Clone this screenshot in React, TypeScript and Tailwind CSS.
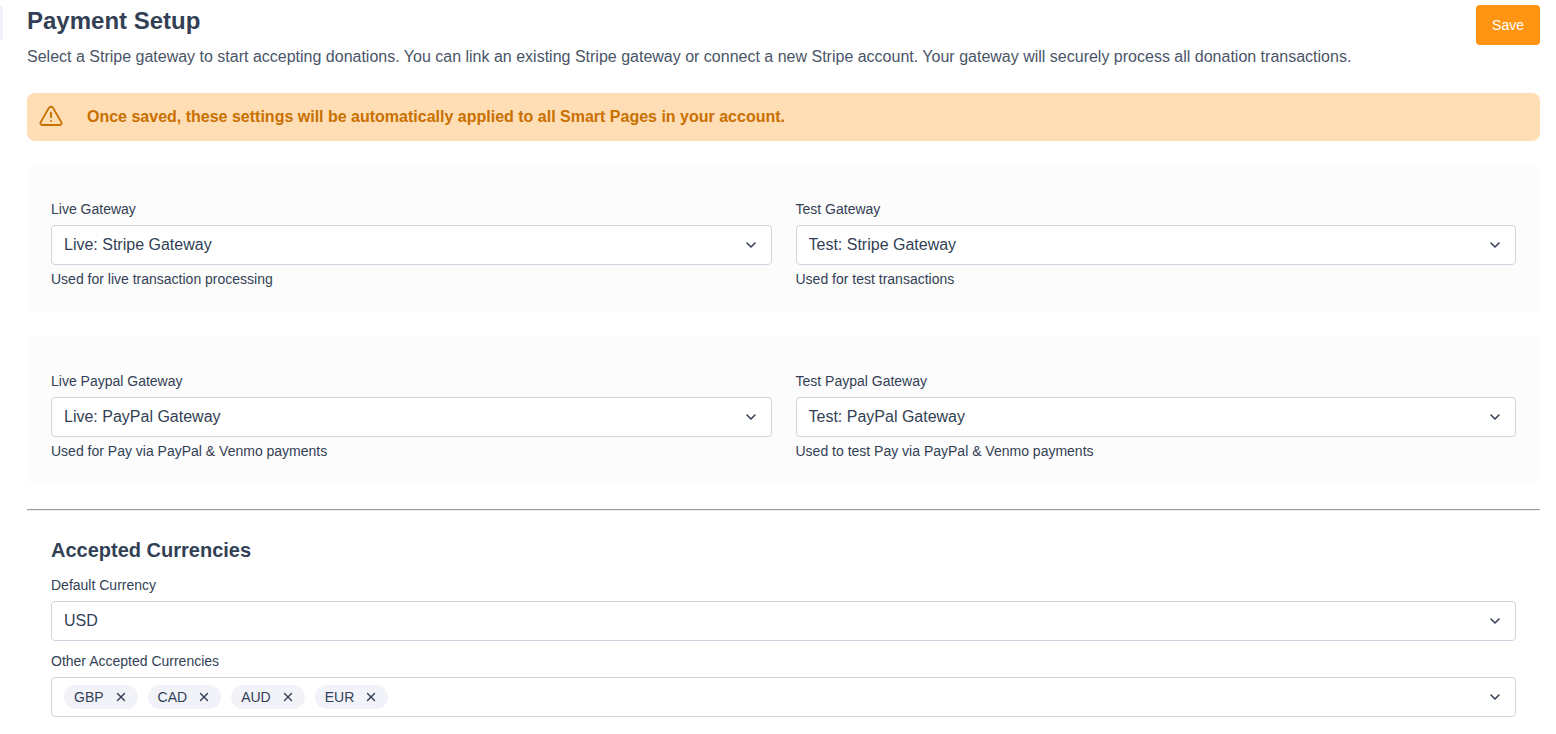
import { useState } from "react";
import { ChevronDown, X } from "lucide-react";

type SelectFieldProps = {
  id: string;
  label: string;
  options: string[];
  hint?: string;
};

function SelectField({ id, label, options, hint }: SelectFieldProps) {
  return (
    <div className="min-w-0">
      <label htmlFor={id} className="block pb-1.5 text-sm leading-5">
        {label}
      </label>
      <div className="relative">
        <select
          id={id}
          aria-describedby={hint ? `${id}-hint` : undefined}
          className="block h-10 w-full appearance-none rounded border border-[#d0d3df] bg-white pr-10 pl-3 text-base outline-none focus:border-[#ff9412]"
        >
          {options.map((option) => (
            <option key={option}>{option}</option>
          ))}
        </select>
        <ChevronDown
          strokeWidth={2.3}
          className="pointer-events-none absolute inset-y-0 right-[13px] my-auto size-4"
        />
      </div>
      {hint && (
        <p id={`${id}-hint`} className="pt-1 text-sm leading-5">
          {hint}
        </p>
      )}
    </div>
  );
}

function WarningIcon() {
  return (
    <svg
      viewBox="0 0 24 24"
      className="size-6 shrink-0"
      fill="none"
      stroke="currentColor"
      strokeWidth="1.9"
      strokeLinecap="round"
      strokeLinejoin="round"
      aria-hidden="true"
    >
      <path d="M9.9 2.9 1.6 17.4a1.75 1.75 0 0 0 1.5 2.6h17.8a1.75 1.75 0 0 0 1.5-2.6L14.1 2.9a2.43 2.43 0 0 0-4.2 0Z" />
      <path d="M12 7.6v4.6M12 15.9v.1" />
    </svg>
  );
}

export default function App() {
  const [currencies, setCurrencies] = useState(["GBP", "CAD", "AUD", "EUR"]);

  return (
    <div className="flex items-start bg-white pt-[5px] pr-4 font-['Liberation_Sans',Arial,sans-serif] text-[#333f55]">
      <div className="h-9 w-[3px] shrink-0 rounded-r bg-[#f2f3f8]" />
      <main className="min-w-0 flex-1 pl-6">
        <header className="flex items-start justify-between gap-6">
          <div>
            <h1 className="text-2xl leading-8 font-bold">Payment Setup</h1>
            <p className="pt-2 text-base leading-6 text-[#4a5568]">
              Select a Stripe gateway to start accepting donations. You can link an existing Stripe gateway or
              connect a new Stripe account. Your gateway will securely process all donation transactions.
            </p>
          </div>
          <button type="button" className="h-10 shrink-0 rounded bg-[#ff9412] px-4 text-sm text-white">
            Save
          </button>
        </header>

        <div role="alert" className="mt-6 flex h-12 items-center gap-6 rounded-lg bg-[#ffddb5] px-3 text-[#c87000]">
          <WarningIcon />
          <p className="font-bold">
            Once saved, these settings will be automatically applied to all Smart Pages in your account.
          </p>
        </div>

        <section className="mt-6 grid grid-cols-2 gap-6 rounded-lg bg-[#fcfcfc] px-6 pt-[34px] pb-6">
          <SelectField
            id="live-gateway"
            label="Live Gateway"
            options={["Live: Stripe Gateway"]}
            hint="Used for live transaction processing"
          />
          <SelectField
            id="test-gateway"
            label="Test Gateway"
            options={["Test: Stripe Gateway"]}
            hint="Used for test transactions"
          />
        </section>

        <section className="mt-6 grid grid-cols-2 gap-6 rounded-lg bg-[#fcfcfc] px-6 pt-[34px] pb-6">
          <SelectField
            id="live-paypal"
            label="Live Paypal Gateway"
            options={["Live: PayPal Gateway"]}
            hint="Used for Pay via PayPal & Venmo payments"
          />
          <SelectField
            id="test-paypal"
            label="Test Paypal Gateway"
            options={["Test: PayPal Gateway"]}
            hint="Used to test Pay via PayPal & Venmo payments"
          />
        </section>

        <hr className="mt-6 h-0.5 border-t border-b border-t-[#999f9f] border-b-[#eeeeee]" />

        <section className="px-6 pt-6">
          <h2 className="text-xl leading-[30px] font-bold">Accepted Currencies</h2>
          <div className="flex flex-col gap-2.5 pt-2.5">
            <SelectField id="default-currency" label="Default Currency" options={["USD"]} />
            <div>
              <p id="other-currencies" className="pb-1.5 text-sm leading-5">
                Other Accepted Currencies
              </p>
              <div
                role="group"
                aria-labelledby="other-currencies"
                className="flex h-10 items-center justify-between rounded border border-[#d0d3df] bg-white px-3"
              >
                <ul className="flex gap-2.5">
                  {currencies.map((code) => (
                    <li
                      key={code}
                      className="flex h-6 items-center gap-2.5 rounded-full bg-[#f2f3f8] px-2.5 text-sm"
                    >
                      {code}
                      <button
                        type="button"
                        aria-label={`Remove ${code}`}
                        onClick={() => setCurrencies(currencies.filter((item) => item !== code))}
                      >
                        <X strokeWidth={2.3} className="size-3.5" />
                      </button>
                    </li>
                  ))}
                </ul>
                <button type="button" aria-label="Show currencies">
                  <ChevronDown strokeWidth={2.3} className="size-4" />
                </button>
              </div>
            </div>
          </div>
        </section>
      </main>
    </div>
  );
}
